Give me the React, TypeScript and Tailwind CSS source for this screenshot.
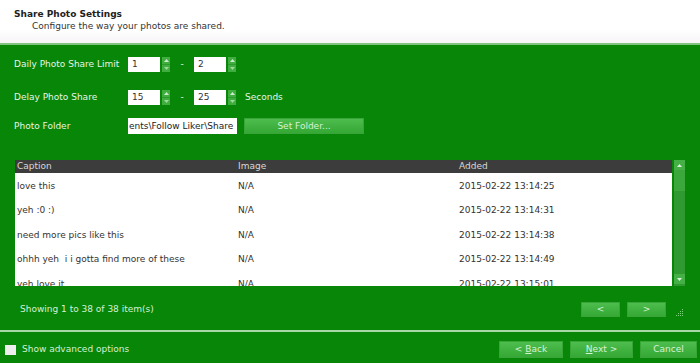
import React from "react";

const font = { fontFamily: '"DejaVu Sans", Verdana, sans-serif' };

function Spinner() {
  return (
    <div className="ml-[2px] flex h-[15px] w-[8px] flex-col bg-[#3fae3f]">
      <div className="flex h-1/2 items-center justify-center border-b border-[#2e9a2e]">
        <svg width="5" height="3" viewBox="0 0 5 3"><path d="M0 3 L2.5 0 L5 3Z" fill="#cdeccd" /></svg>
      </div>
      <div className="flex h-1/2 items-center justify-center">
        <svg width="5" height="3" viewBox="0 0 5 3"><path d="M0 0 L2.5 3 L5 0Z" fill="#9fd89f" /></svg>
      </div>
    </div>
  );
}

function NumInput({ v }: { v: string }) {
  return (
    <div className="flex items-center">
      <div className="flex h-[15px] w-[32px] items-center bg-white pl-[4px] text-[#333]">{v}</div>
      <Spinner />
    </div>
  );
}

function GButton({ children, className }: { children: React.ReactNode; className: string }) {
  return (
    <div
      className={
        "flex items-center justify-center border border-[#39a539] bg-gradient-to-b from-[#4dbd4d] to-[#35a835] text-[#d6f2d6] " +
        className
      }
    >
      {children}
    </div>
  );
}

const rows = [
  ["love this", "N/A", "2015-02-22 13:14:25"],
  ["yeh :0 :)", "N/A", "2015-02-22 13:14:31"],
  ["need more pics like this", "N/A", "2015-02-22 13:14:38"],
  ["ohhh yeh  i i gotta find more of these", "N/A", "2015-02-22 13:14:49"],
  ["yeh love it", "N/A", "2015-02-22 13:15:01"],
];

export default function App() {
  return (
    <div className="flex h-[363px] w-[700px] flex-col overflow-hidden bg-[#078607] text-[9px] leading-[11px]" style={font}>
      <div className="h-[43px] bg-gradient-to-b from-white from-70% to-[#f6f4f6] pl-[14px] pt-[9px]">
        <div className="font-bold text-[#222]">Share Photo Settings</div>
        <div className="pl-[18px] pt-[1px] text-[#333]">Configure the way your photos are shared.</div>
      </div>
      <div className="h-[2px] bg-[#80c480]" />

      <div className="mt-[12px] flex h-[15px] items-center pl-[14px] text-[#e6f5e6]">
        <div className="w-[114px]">Daily Photo Share Limit</div>
        <NumInput v="1" />
        <div className="w-[24px] text-center">-</div>
        <NumInput v="2" />
      </div>
      <div className="mt-[18px] flex h-[15px] items-center pl-[14px] text-[#e6f5e6]">
        <div className="w-[114px]">Delay Photo Share</div>
        <NumInput v="15" />
        <div className="w-[24px] text-center">-</div>
        <NumInput v="25" />
        <div className="ml-[9px]">Seconds</div>
      </div>
      <div className="mt-[13px] flex h-[16px] items-center pl-[14px] text-[#e6f5e6]">
        <div className="w-[114px]">Photo Folder</div>
        <div className="flex h-[16px] w-[109px] items-center overflow-hidden whitespace-nowrap bg-white pl-[1px] text-[#222]">
          ents\Follow Liker\Share
        </div>
        <GButton className="ml-[7px] h-[16px] w-[120px]">Set Folder...</GButton>
      </div>

      <div className="mx-[15px] mt-[26px] flex h-[126px]">
        <div className="flex flex-1 flex-col overflow-hidden">
          <div className="flex h-[13px] items-center bg-[#3c3c3c] text-[#d8d8d8]">
            <div className="w-[223px] pl-[2px]">Caption</div>
            <div className="w-[221px]">Image</div>
            <div className="flex-1">Added</div>
          </div>
          <div className="flex-1 overflow-hidden bg-white pt-[1px] text-[#333]">
            {rows.map((r, i) => (
              <div key={i} className="flex h-[24.5px] items-center">
                <div className="w-[223px] pl-[2px] whitespace-pre">{r[0]}</div>
                <div className="w-[221px]">{r[1]}</div>
                <div className="flex-1">{r[2]}</div>
              </div>
            ))}
          </div>
        </div>
        <div className="ml-[2px] flex w-[11px] flex-col bg-[#2f9a2f]">
          <div className="flex h-[10px] items-center justify-center bg-[#45b045]">
            <svg width="5" height="3" viewBox="0 0 5 3"><path d="M0 3 L2.5 0 L5 3Z" fill="#d8f2d8" /></svg>
          </div>
          <div className="h-[21px] border border-[#3da73d] bg-[#3aa83a]" />
          <div className="flex-1" />
          <div className="mb-[2px] flex h-[10px] items-center justify-center bg-[#45b045]">
            <svg width="5" height="3" viewBox="0 0 5 3"><path d="M0 0 L2.5 3 L5 0Z" fill="#d8f2d8" /></svg>
          </div>
        </div>
      </div>

      <div className="mt-[16px] flex h-[15px] items-center pl-[20px] pr-[16px] text-[#d6f0d6]">
        <div className="flex-1">Showing 1 to 38 of 38 item(s)</div>
        <GButton className="h-[15px] w-[39px]">&lt;</GButton>
        <GButton className="ml-[7px] h-[15px] w-[39px]">&gt;</GButton>
        <svg className="ml-[10px] mt-[6px]" width="8" height="8" viewBox="0 0 8 8">
          {[
            [6, 0], [6, 2], [4, 2], [6, 4], [4, 4], [2, 4], [6, 6], [4, 6], [2, 6], [0, 6],
          ].map(([x, y], i) => (
            <rect key={i} x={x} y={y} width="1" height="1" fill="#7fcf7f" />
          ))}
        </svg>
      </div>

      <div className="mt-[13px] h-[2px] bg-[#a8d8a8]" />

      <div className="mt-[9px] flex h-[17px] items-center pr-[3px] text-[#d6f0d6]">
        <div className="ml-[5px] h-[10px] w-[11px] bg-[#eeeeee]" />
        <div className="ml-[6px] flex-1">Show advanced options</div>
        <GButton className="h-[17px] w-[64px]">
          &lt; <span className="ml-[3px] underline">B</span>ack
        </GButton>
        <GButton className="ml-[7px] h-[17px] w-[63px]">
          <span className="underline">N</span>ext &gt;
        </GButton>
        <GButton className="ml-[7px] h-[17px] w-[57px]">Cancel</GButton>
      </div>
    </div>
  );
}
